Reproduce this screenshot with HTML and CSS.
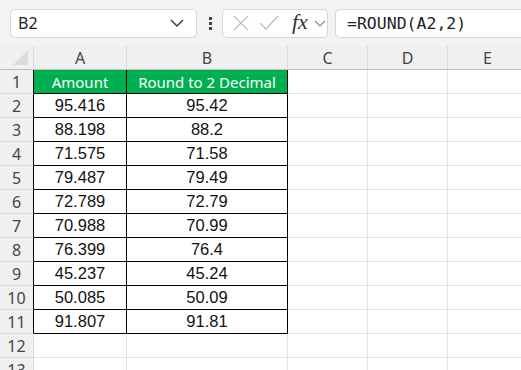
FILE: index.html
```html
<!DOCTYPE html>
<html lang="en">
<head>
<meta charset="UTF-8">
<title>Round to 2 Decimal</title>
<link rel="stylesheet" href="styles.css">
</head>
<body>
    <div class="toolbar">
        <div class="name-box">
            <span>B2</span>
            <svg class="chev" width="14" height="8" viewBox="0 0 14 8"><path d="M1 1 L7 7 L13 1" fill="none" stroke="#333" stroke-width="1.4"/></svg>
        </div>
        <div class="dots"><i></i><i></i><i></i></div>
        <div class="fx-group">
            <svg width="16" height="16" viewBox="0 0 16 16"><path d="M1 1 L15 15 M15 1 L1 15" stroke="#bdbdbd" stroke-width="1.3"/></svg>
            <svg width="20" height="16" viewBox="0 0 20 16"><path d="M1 8 L7 14 L19 1" fill="none" stroke="#bdbdbd" stroke-width="1.3"/></svg>
            <span class="fx">fx</span>
            <svg width="12" height="7" viewBox="0 0 12 7"><path d="M1 1 L6 6 L11 1" fill="none" stroke="#8a8a8a" stroke-width="1.2"/></svg>
        </div>
        <div class="formula">=ROUND(A2,2)</div>
    </div>

    <div class="sheet" id="sheet">
        <div class="corner"><span class="tri"></span></div>
        <div class="col-head">A</div>
        <div class="col-head">B</div>
        <div class="col-head">C</div>
        <div class="col-head">D</div>
        <div class="col-head">E</div>
    </div>

    <script>
        const sheet = document.getElementById('sheet');
        const values = [
            ['95.416', '95.42'], ['88.198', '88.2'], ['71.575', '71.58'],
            ['79.487', '79.49'], ['72.789', '72.79'], ['70.988', '70.99'],
            ['76.399', '76.4'], ['45.237', '45.24'], ['50.085', '50.09'],
            ['91.807', '91.81']
        ];

        function addCell(text, cls) {
            const cell = document.createElement('div');
            cell.className = cls;
            cell.textContent = text;
            sheet.appendChild(cell);
        }

        for (let r = 1; r <= 13; r++) {
            const inTable = r <= 11;
            addCell(r, inTable ? 'row-head edge' : 'row-head');
            if (r === 1) {
                addCell('Amount', 'cell title');
                addCell('Round to 2 Decimal', 'cell title');
            } else if (inTable) {
                addCell(values[r - 2][0], 'cell data');
                addCell(values[r - 2][1], 'cell data');
            } else {
                addCell('', 'cell');
                addCell('', 'cell');
            }
            addCell('', 'cell');
            addCell('', 'cell');
            addCell('', 'cell');
        }
    </script>
</body>
</html>
```

FILE: styles.css
```css
body, html {
    margin: 0;
    padding: 0;
    height: 100%;
    overflow: hidden;
}

body {
    font-family: "Noto Sans", Arial, sans-serif;
    background: #f3f3f3;
}

.toolbar {
    display: flex;
    align-items: center;
    height: 46px;
    padding-left: 10px;
    box-sizing: border-box;
    background: #f3f3f3;
}

.name-box {
    display: flex;
    align-items: center;
    justify-content: space-between;
    width: 187px;
    height: 29px;
    box-sizing: border-box;
    padding: 0 12px 0 7px;
    background: #fff;
    border: 1px solid #d6d6d6;
    border-radius: 5px;
    font-size: 16px;
    color: #222;
}

.dots {
    display: flex;
    flex-direction: column;
    gap: 2px;
    margin: 0 10px 0 12px;
}

.dots i {
    display: block;
    width: 3px;
    height: 3px;
    background: #444;
}

.fx-group {
    display: flex;
    align-items: center;
    width: 106px;
    height: 29px;
    box-sizing: border-box;
    padding-left: 10px;
    background: #fff;
    border: 1px solid #d6d6d6;
    border-radius: 5px;
}

.fx-group svg:nth-child(2) {
    margin-left: 10px;
}

.fx {
    font-family: "Liberation Serif", serif;
    font-style: italic;
    font-size: 22px;
    line-height: 1;
    color: #333;
    margin: 0 6px 2px 13px;
}

.formula {
    flex: 1;
    height: 29px;
    margin-left: 7px;
    box-sizing: border-box;
    padding-left: 11px;
    line-height: 27px;
    background: #fff;
    border: 1px solid #d6d6d6;
    border-right: none;
    border-radius: 5px 0 0 5px;
    font-family: "DejaVu Sans Mono", monospace;
    font-size: 16.5px;
    color: #222;
}

.sheet {
    display: grid;
    grid-template-columns: 34px 93px 161px 80px 80px 80px;
    grid-auto-rows: 24px;
    background: #fff;
}

.corner, .col-head, .row-head {
    background: #f0f0f0;
    color: #444;
    box-sizing: border-box;
    font-size: 16px;
}

.corner {
    position: relative;
    border-right: 1px solid #dadada;
    border-bottom: 1px solid #bdbdbd;
}

.tri {
    position: absolute;
    right: 5px;
    bottom: 4px;
    width: 0;
    height: 0;
    border-left: 15px solid transparent;
    border-bottom: 15px solid #dcdcdc;
}

.col-head {
    display: flex;
    align-items: center;
    justify-content: center;
    border-right: 1px solid #dadada;
    border-bottom: 1px solid #bdbdbd;
}

.row-head {
    display: flex;
    align-items: center;
    justify-content: center;
    border-right: 1px solid #dadada;
    border-bottom: 1px solid #dadada;
}

.row-head.edge {
    border-right-color: #000;
}

.cell {
    box-sizing: border-box;
    border-right: 1px solid #e1e1e1;
    border-bottom: 1px solid #e1e1e1;
    display: flex;
    align-items: center;
    justify-content: center;
    font-family: "Liberation Sans", Arial, sans-serif;
    font-size: 16.5px;
    color: #111;
}

.cell.data, .cell.title {
    border-right-color: #000;
    border-bottom-color: #000;
}

.cell.title {
    background: #00b050;
    color: #fff;
    font-family: "Noto Sans", Arial, sans-serif;
    font-size: 15px;
}
```
